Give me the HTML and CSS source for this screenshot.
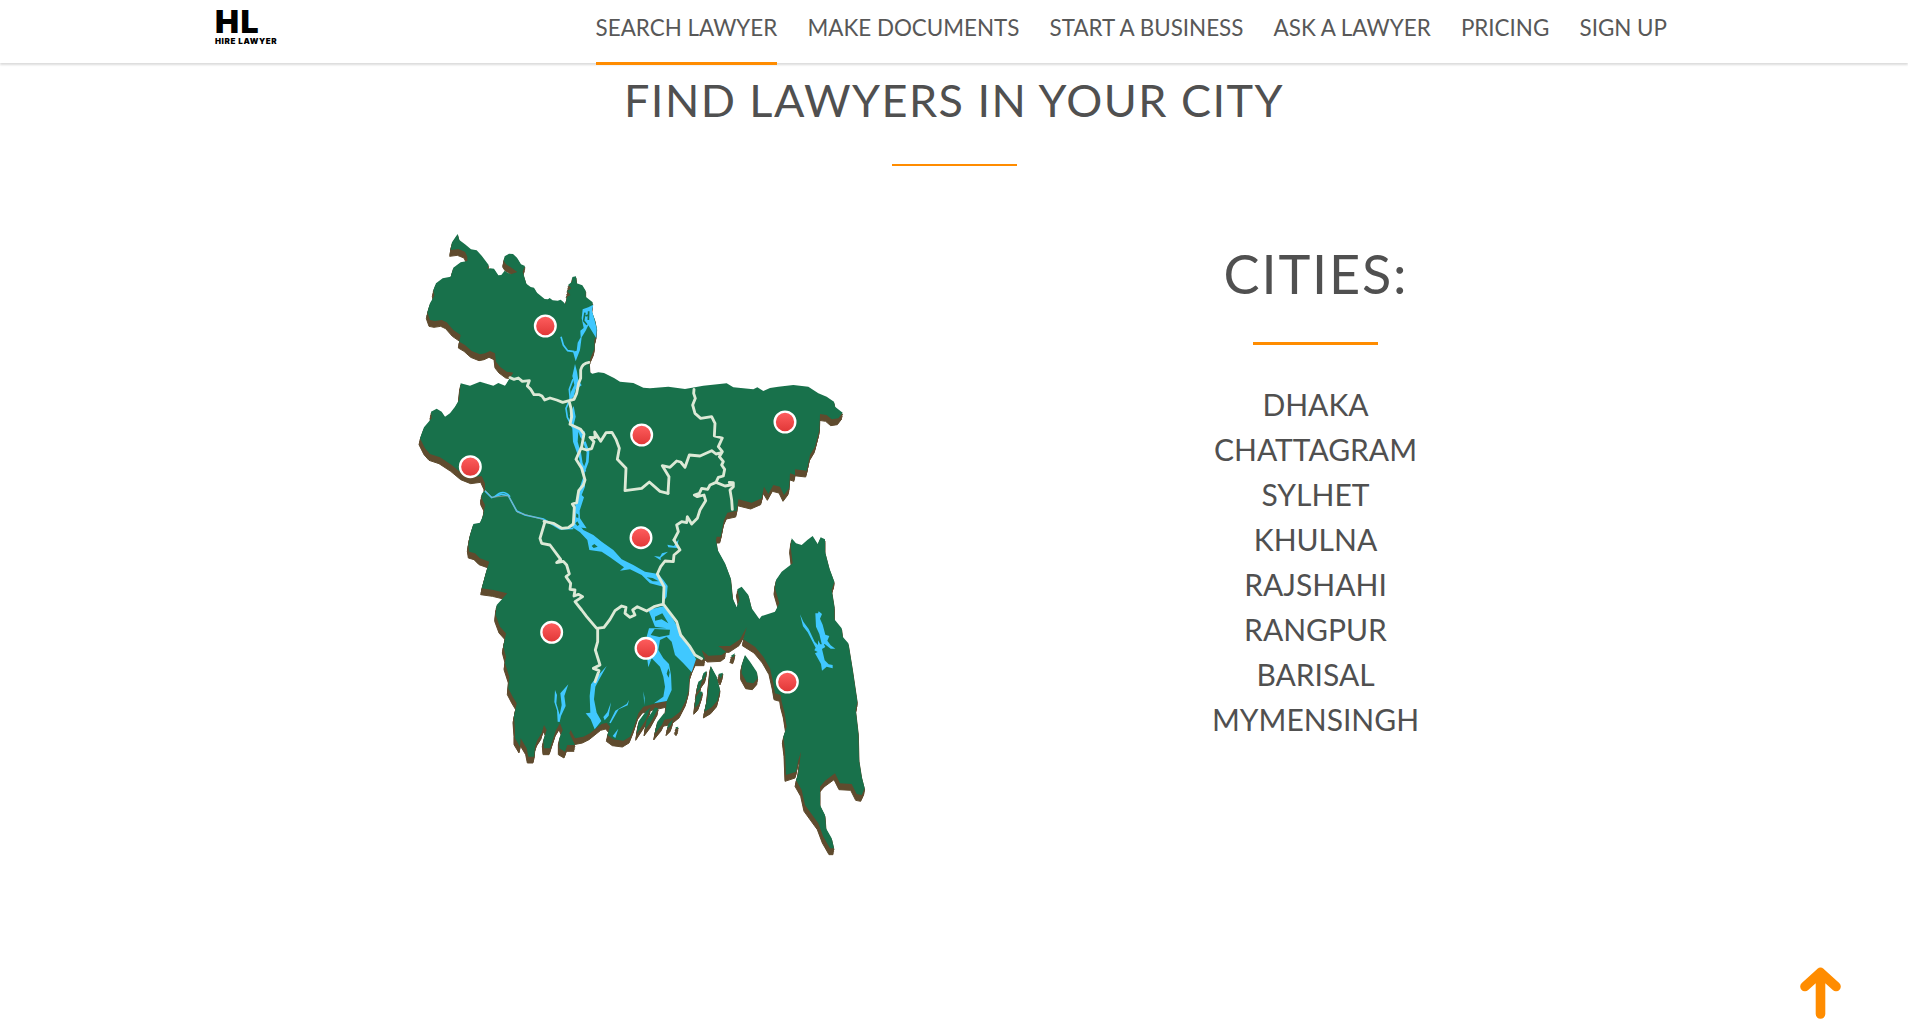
FILE: index.html
```html
<!DOCTYPE html>
<html lang="en">
<head>
<meta charset="utf-8">
<title>Hire Lawyer</title>
<link rel="stylesheet" href="styles.css">
</head>
<body>
<header class="navbar">
  <a class="logo" aria-label="Hire Lawyer">
    <span class="logo-mark">HL</span>
    <span class="logo-name">HIRE LAWYER</span>
  </a>
  <nav class="menu">
    <a class="menu-item active">SEARCH LAWYER</a>
    <a class="menu-item">MAKE DOCUMENTS</a>
    <a class="menu-item">START A BUSINESS</a>
    <a class="menu-item">ASK A LAWYER</a>
    <a class="menu-item">PRICING</a>
    <a class="menu-item">SIGN UP</a>
  </nav>
</header>
<main>
  <h1 class="title">FIND LAWYERS IN YOUR CITY</h1>
  <div class="rule"></div>
  <div class="content">
    <svg class="map" viewBox="0 0 1380 1920">
      <defs>
        <linearGradient id="pin" x1="0" y1="0" x2="0" y2="1"><stop offset="0" stop-color="#ff5f5f"/><stop offset="1" stop-color="#e03636"/></linearGradient>
        <g id="land">
          <path d="M143 27L148 45 165 58 183 73 200 76 215 92 236 120 232 132 240 130 252 131 265 151 274 150 284 137 293 143 303 148 322 141 300 125 288 118 281 107 284 94 297 86 309 87 321 98 333 118 345 123 338 140 349 176 362 186 372 188 381 203 404 222 414 223 419 219 428 226 443 227 452 224 461 232 466 238 471 215 481 210 471 198 484 190 474 180 486 170 487 156 498 154 500 175 517 181 527 197 527 215 548 232 545 258 555 285 560 310 558 335 553 345 553 372 545 390 538 410 540 442 547 446 565 442 582 444 612 459 630 470 670 474 700 488 720 490 775 485 825 492 880 482 950 475 970 487 1030 493 1042 487 1060 498 1080 489 1105 485 1150 480 1195 485 1225 505 1250 515 1272 530 1275 545 1298 563 1285 580 1265 583 1250 570 1230 567 1228 615 1215 665 1200 690 1190 737 1155 733 1155 750 1140 745 1137 790 1122 810 1110 785 1090 780 1075 807 1062 785 1055 820 1025 833 985 823 980 857 952 863 942 885 932 935 920 935 918 945 923 975 945 1015 962 1060 968 1120 980 1147 988 1125 982 1093 995 1085 1015 1110 1025 1150 1048 1182 1055 1173 1095 1160 1108 1135 1095 1090 1098 1065 1115 1040 1148 1015 1142 965 1145 940 1158 955 1175 960 1192 945 1208 933 1223 957 1232 937 1245 943 1245 980 1258 1030 1273 1070 1265 1095 1273 1145 1273 1183 1295 1210 1298 1235 1315 1255 1328 1335 1342 1430 1337 1455 1345 1525 1347 1605 1355 1655 1364 1690 1355 1710 1340 1707 1325 1677 1290 1675 1275 1645 1245 1667 1230 1685 1230 1740 1245 1770 1248 1810 1265 1840 1272 1870 1260 1870 1240 1835 1225 1795 1185 1740 1175 1695 1158 1665 1165 1645 1173 1580 1165 1605 1158 1640 1128 1650 1125 1575 1120 1535 1130 1505 1123 1460 1115 1430 1112 1410 1095 1405 1090 1375 1080 1330 1060 1295 1035 1265 1000 1243 1010 1207 990 1243 960 1263 925 1263 948 1280 935 1290 895 1292 875 1275 885 1303 858 1303 848 1325 838 1355 836 1395 828 1425 810 1460 785 1480 760 1485 768 1450 770 1428 730 1437 700 1445 685 1465 672 1505 660 1535 640 1547 610 1543 592 1530 600 1505 590 1493 575 1497 555 1513 540 1525 520 1535 495 1540 482 1515 478 1525 495 1560 472 1560 465 1580 448 1570 448 1540 458 1515 450 1495 438 1515 428 1545 420 1570 402 1570 400 1545 410 1515 402 1500 395 1525 382 1545 375 1565 372 1595 355 1595 350 1570 332 1540 330 1565 315 1540 315 1515 312 1475 320 1435 308 1415 295 1390 298 1355 285 1315 288 1295 280 1265 288 1225 270 1205 257 1170 260 1140 292 1105 250 1095 215 1090 230 1035 238 1010 210 1000 195 985 178 980 175 960 180 930 190 897 210 893 220 870 225 840 215 820 215 807 225 795 225 775 215 753 185 757 155 745 125 720 90 697 60 687 45 670 30 640 42 607 65 580 63 560 80 551 95 560 105 575 120 565 135 545 147 525 152 475 180 482 210 470 250 482 265 474 285 482 290 475 300 458 310 443 290 440 270 425 258 410 255 385 240 378 225 385 210 388 185 378 165 360 148 350 152 330 130 315 110 292 95 285 75 288 60 285 52 262 60 235 73 212 70 195 78 175 98 160 122 155 130 128 152 112 172 108 172 95 165 80 145 72 122 75 126 52 135 38Z"/>
          <g transform="translate(840 885)">
            <path d="M165 405L180 425 200 455 203 475 190 490 170 487 155 460 155 435Z"/>
            <path d="M62 437L80 470 90 510 82 542 65 562 43 575 52 535Z"/>
            <path d="M40 460l10-8-4 18-12 16zM25 485l12-8-8 30-10 12zM18 530l12-16 8 2-12 36-12 12zM85 462l14-4-6 18zM122 408l13-8-4 12z"/>
          </g>
          <g transform="translate(120 825)">
            <path d="M566 664l22-30 14-12-16 40-26 40zM590 660l25-38 10 3-22 40-18 24zM622 665l20-25 6 8-12 26-22 27zM655 672l14-14-6 18-12 12zM676 682l9-2-4 8z"/>
          </g>
        </g>
      </defs>
      <g class="soil">
        <use href="#land" y="5"/><use href="#land" x="-1" y="10"/><use href="#land" x="-2" y="15"/><use href="#land" x="-3" y="19"/>
      </g>
      <use class="grass" href="#land"/>
      <g class="water">
        <g transform="translate(405 225)">
          <path d="M113 28L130 22 145 14 141 32 148 58 155 85 154 115 140 92 130 76 122 92 110 112 105 150 92 184 84 155 95 152 98 128 107 112 106 92 116 84 110 55Z"/>
          <path d="M90 192L96 215 100 240 110 256 92 268 86 290 72 302 78 275 88 255 82 228Z"/>
          <path d="M86 318L92 350 86 374 120 395 116 424 106 412 100 395 98 425 108 460 98 464 84 425 82 385 74 345Z"/>
          <path d="M120 515L120 560 110 585 117 592 104 632 105 655 125 685 82 680 88 640 92 610 105 560Z"/>
        </g>
        <g transform="translate(120 825)">
          <path d="M365 80L385 72 400 90 430 105 455 125 490 150 515 178 550 195 585 215 625 222 640 240 653 258 650 290 635 315 640 260 600 250 575 225 540 208 510 212 522 202 480 172 455 155 418 150 412 120 390 97Z"/>
          <path d="M595 330L645 317 665 350 685 385 695 415 720 440 738 478 725 517 700 490 675 465 665 425 650 410 630 420 625 450 640 475 657 492 663 525 665 570 650 603 612 610 640 590 645 560 640 530 630 500 605 475 595 502 592 480 620 440 590 410 597 385 650 385 615 380Z"/>
          <path d="M315 570l6 15-2 25 10 34 6-29-4-35 24-27-12 35 4 30-14 30-4 18-6-1-2-34-8-25zM470 498l-20 36-14 26-4 38 8 40 14 25-20 25-12-30-15-18 14-2-2-50 4-35 20-25zM483 607l-7 40-12 14-4-10 12-14zM537 600l-4 16-27 12-24 42-4-2 18-36 34-20zM488 708l17-22-9 28zM580 574l4 20-1 22zM612 168l18 2 6-10 18-5-22 18 0 8zM652 134l20 4 14-20-5 26-26-2z"/>
        </g>
        <g transform="translate(840 885)">
          <path d="M330 283l10 22 16 22 18 38 10 10 0-14 7 12 10-2 5 10-10 6 8 34 12 12 12 2 0 10-18-5-14 12-3-20-18-32 8-4-10-5 4-8-24-46-14-18zM376 280l8 0 2-6 10 8-6 14 8 18 8 30 12 4-6 14 10 14 14 10-14 0-18-14-8 4-8-34-10-22z"/>
        </g>
      </g>
      <g class="islets">
        <path transform="translate(120 825)" d="M425 138l8-6 10 8-12 4zM590 232l18 2 18 10-18 0zM615 350l22-10 18 30-20-12-20 4zM602 405l12-18 46 2-2 16-30 6zM655 505l4 12-3 16-6-12zM376 70l6-6 6 10-6 4z"/>
        <path transform="translate(405 225)" d="M94 640l6 4 0 10-7-2z"/>
      </g>
      <path class="channel" transform="translate(405 225)" d="M120 38L116 62 126 74M131 34L130 60M122 48L132 44"/>
      <g class="stream">
        <path d="M225 798L245 818 275 808 295 812 320 858 345 870 400 882 450 912 490 910"/>
        <path d="M255 815Q280 790 300 815"/>
        <path transform="translate(405 225)" d="M48 110L55 135 68 152 88 155M84 238L73 268 76 298M74 300L63 325 67 352 84 384"/>
        <path class="wide" transform="translate(405 225)" d="M118 425L129 455 127 485 114 520M104 458L109 490 120 515"/>
      </g>
      <path class="bank" d="M225 795L245 817 295 812 322 862 400 884"/>
      <g class="borders">
        <path transform="translate(0 435)" d="M300 23L312 28 325 24 337 34 358 32 352 48 362 58 372 74 388 74 396 78 404 90 420 84 440 90 458 97 492 88 500 70 506 40 512 25 512 0Q516-20 537-23M477 92L483 115 485 140 480 163 512 178 522 192 515 230 498 268 515 295 525 330 520 345 506 362 500 398 487 402 493 412 490 462 475 473 455 475 430 460 402 454M515 235L530 240 545 236 552 215 540 202 556 203 554 186 572 214 588 188 606 187 618 208 628 235 622 268 648 295 645 362 695 355 718 336 750 364 774 370"/>
        <path transform="translate(450 375)" d="M324 430L327 380 307 347 330 352 350 333 362 336 375 352 388 315 420 318 455 302 468 312 485 308M402 118L401 130 406 145 398 165 405 190 422 205 455 200 465 220 463 258 487 264 475 290 487 305 478 320 490 335 485 345 494 358 490 378 475 382 468 397 495 408 512 405 508 397 520 398 520 410 510 420 515 450 517 478M468 397L450 405 443 418 425 415 418 430 403 435 412 440 432 435 437 452 420 480 412 505 395 522 382 500 380 518 365 515 350 525 355 545 342 570"/>
        <path transform="translate(120 825)" d="M672 120L690 150 672 165 670 185 645 183 632 200 622 222 642 260 640 312 612 320 590 333 562 320 548 330 555 345 540 352 525 340 528 322 515 318 495 332 480 358 462 382 440 385 410 350 395 330 375 305 398 290 385 283 372 288 375 270 360 268 362 250 348 230 358 222 350 195 340 184 320 188 332 178 300 135 275 130 270 115 285 65M640 312L680 365 692 405 720 440 735 465 755 476M443 388L443 425 436 450 450 495 430 505 447 512 435 545"/>
      </g>
      <g class="pins">
        <circle cx="406" cy="303" r="31"/><circle cx="181" cy="725" r="31"/><circle cx="695" cy="630" r="31"/><circle cx="1125" cy="591" r="31"/><circle cx="693" cy="938" r="31"/><circle cx="425" cy="1222" r="31"/><circle cx="708" cy="1270" r="31"/><circle cx="1132" cy="1371" r="31"/>
      </g>
    </svg>
    <section class="cities">
      <h2 class="cities-title">CITIES:</h2>
      <div class="rule rule-thick"></div>
      <ul class="city-list">
        <li>DHAKA</li><li>CHATTAGRAM</li><li>SYLHET</li><li>KHULNA</li><li>RAJSHAHI</li><li>RANGPUR</li><li>BARISAL</li><li>MYMENSINGH</li>
      </ul>
    </section>
  </div>
</main>
<a class="to-top" aria-label="Back to top">
  <svg width="42" height="54" viewBox="0 0 42 54"><path d="M20.500 48V6.500M5 20.500L20.500 6.500L36 20.500"/></svg>
</a>
</body>
</html>
```
FILE: styles.css
```css
* { box-sizing: border-box; }
body {
  margin: 0;
  height: 1024px;
  overflow: hidden;
  background: #fff;
  color: #505050;
  font-family: Lato, "Liberation Sans", sans-serif;
}
.navbar {
  display: flex;
  justify-content: space-between;
  height: 63px;
  padding: 0 241px 0 215px;
  box-shadow: 0 2px 2px rgba(0, 0, 0, .14);
}
.logo {
  display: flex;
  flex-direction: column;
  color: #000;
  font-family: Inter, sans-serif;
  font-weight: 900;
  white-space: nowrap;
}
.logo-mark { height: 37px; font-size: 32px; line-height: 43px; letter-spacing: 1.5px; }
.logo-name { font-size: 8px; line-height: 8px; letter-spacing: .62px; }
.menu { display: flex; gap: 30.2px; }
.menu-item {
  height: 65px;
  color: #585858;
  font-size: 22.4px;
  line-height: 55px;
  white-space: nowrap;
}
.menu-item.active { border-bottom: 3px solid #ff8c00; }
.title {
  margin: 10px 0 0;
  font-size: 45px;
  font-weight: 400;
  line-height: 54px;
  letter-spacing: 1.45px;
  text-align: center;
}
.rule {
  width: 125px;
  height: 2px;
  margin: 37px auto 0;
  background: #ff8c00;
}
.content {
  display: flex;
  padding: 59px 0 0 410px;
}
.map { width: 460px; height: 640px; flex: none; }
.soil { fill: #5f4b2e; stroke: #5f4b2e; stroke-width: 3; }
.grass { fill: #18714b; }
.water { fill: #40c8ff; }
.islets { fill: #18714b; }
.channel { fill: none; stroke: #18714b; stroke-width: 5; }
.stream { fill: none; stroke: #40c8ff; stroke-width: 5; }
.stream .wide { stroke-width: 8; }
.bank { fill: none; stroke: #a9a49c; stroke-width: 2; }
.borders { fill: none; stroke: #dce9d6; stroke-width: 8.5; stroke-linejoin: round; stroke-linecap: round; }
.pins { fill: url(#pin); stroke: #fff; stroke-width: 7; }
.cities {
  width: 501px;
  margin-left: 195px;
  padding-top: 17px;
  text-align: center;
}
.cities-title {
  margin: 0;
  padding-left: 1px;
  font-size: 54px;
  font-weight: 400;
  line-height: 64px;
  letter-spacing: 1.8px;
}
.rule-thick { height: 3px; margin-top: 36px; }
.city-list {
  margin: 37px 0 0;
  padding: 0;
  list-style: none;
  font-size: 30px;
  line-height: 45px;
}
.to-top { position: fixed; left: 1800px; top: 966px; }
.to-top svg { display: block; fill: none; stroke: #ff8c00; stroke-width: 9.6; stroke-linecap: round; stroke-linejoin: round; }
```
